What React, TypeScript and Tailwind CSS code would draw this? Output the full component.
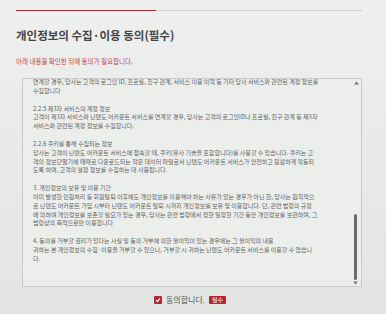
import React from "react";

const paras: string[][] = [
  [
    "연계할 경우, 당사는 고객의 로그인 ID, 프로필, 친구 관계, 서비스 이용 이력 등 기타 당사 서비스와 관련된 계정 정보를",
    "수집합니다",
  ],
  [
    "2.2.5 제3자 서비스의 계정 정보",
    "고객이 제3자 서비스와 닌텐도 어카운트 서비스를 연계할 경우, 당사는 고객의 로그인ID나 프로필, 친구 관계 등 제3자",
    "서비스와 관련된 계정 정보를 수집합니다.",
  ],
  [
    "2.2.6 쿠키를 통해 수집되는 정보",
    "당사는 고객이 닌텐도 어카운트 서비스에 접속할 때, 쿠키(유사 기술을 포함합니다)를 사용할 수 있습니다. 쿠키는 고",
    "객의 정보단말기에 때때로 다운로드되는 작은 데이터 파일로서 닌텐도 어카운트 서비스가 안전하고 원활하게 작동되",
    "도록 하며, 고객의 설정 정보를 수집하는 데 사용됩니다.",
  ],
  [
    "3. 개인정보의 보유 및 이용 기간",
    "이미 발생한 민원처리 등 회원탈퇴 이후에도 개인정보를 이용해야 하는 사유가 있는 경우가 아닌 한, 당사는 원칙적으",
    "로 닌텐도 어카운트 가입 시부터 닌텐도 어카운트 탈퇴 시까지 개인정보를 보유 및 이용합니다. 단, 관련 법령의 규정",
    "에 의하여 개인정보를 보존할 필요가 있는 경우, 당사는 관련 법령에서 정한 일정한 기간 동안 개인정보를 보관하며, 그",
    "법령상의 목적으로만 이용합니다",
  ],
  [
    "4. 동의를 거부할 권리가 있다는 사실 및 동의 거부에 의한 불이익이 있는 경우에는 그 불이익의 내용",
    "귀하는 본 개인정보의 수집·이용을 거부할 수 있으나, 거부할 시 귀하는 닌텐도 어카운트 서비스를 이용할 수 없습니",
    "다.",
  ],
];

export default function App() {
  return (
    <div className="w-[386px] h-[314px] overflow-hidden bg-gradient-to-b from-[#eef0ef] to-[#e3e5e3] font-['Noto_Sans_CJK_KR',sans-serif] flex flex-col">
      {/* progress */}
      <div className="mt-[10px] ml-[16px] w-[346px] flex items-center">
        <div className="w-[140px] h-px bg-[#9b3034]" />
        <div className="flex-1 h-px bg-[#cfd1cf]" />
      </div>

      {/* title */}
      <div className="mt-[17px] ml-[16px] text-[11.5px] leading-[15px] font-semibold text-[#454545] whitespace-nowrap">
        개인정보의 수집·이용 동의(필수)
      </div>

      {/* subtitle */}
      <div className="mt-[14px] ml-[16px] text-[6.5px] leading-[8px] text-[#c2464b] whitespace-nowrap">
        아래 내용을 확인한 뒤에 동의가 필요합니다.
      </div>

      {/* box */}
      <div className="mt-[13px] ml-[22px] w-[340px] h-[209px] border border-[#c9cbc9] bg-[#eceeec] flex overflow-hidden">
        <div className="flex-1 pl-[10px] -mt-[1px] text-[6px] leading-[8.8px] text-[#5e5e5e] flex flex-col gap-[9px] overflow-hidden">
          {paras.map((p, i) => (
            <div key={i} className="flex flex-col">
              {p.map((l, j) => (
                <div key={j} className="whitespace-nowrap">
                  {l}
                </div>
              ))}
            </div>
          ))}
        </div>
        <div className="w-[10px] flex flex-col items-center pt-[2px] pb-[1px] mr-[1px]">
          <svg width="5" height="4" viewBox="0 0 5 4" className="ml-[2px]">
            <polygon points="2.5,0.5 4.8,3.5 0.2,3.5" fill="#6f6f6f" />
          </svg>
          <div className="flex-1 flex flex-col justify-end items-center">
            <div className="w-[3px] h-[66px] rounded-full bg-[#6b6b6b]" />
          </div>
          <svg width="5" height="4" viewBox="0 0 5 4" className="mt-[1px]">
            <polygon points="0.2,0.5 4.8,0.5 2.5,3.5" fill="#6f6f6f" />
          </svg>
        </div>
      </div>

      {/* agree row */}
      <div className="mt-[8px] flex items-center justify-center gap-[4px] pr-[6px]">
        <div className="w-[8px] h-[8px] bg-[#b3282f] rounded-[1px] flex items-center justify-center">
          <svg width="6" height="6" viewBox="0 0 6 6">
            <polyline points="1,3.2 2.4,4.6 5,1.4" fill="none" stroke="#ffffff" strokeWidth="1.1" />
          </svg>
        </div>
        <span className="text-[8px] leading-[10px] text-[#555555] whitespace-nowrap">동의합니다.</span>
        <span className="h-[8px] px-[3px] bg-[#b3282f] text-white text-[6px] leading-[8px] rounded-[1px] whitespace-nowrap">필수</span>
      </div>
    </div>
  );
}
